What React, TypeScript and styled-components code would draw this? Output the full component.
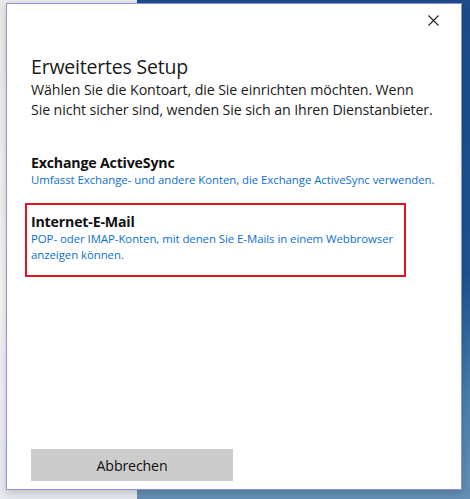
import React from "react";
import styled, { createGlobalStyle } from "styled-components";

const Global = createGlobalStyle`
  html, body { margin: 0; padding: 0; }
  body { width: 470px; height: 499px; overflow: hidden; font-family: "Open Sans", "Noto Sans", sans-serif; }
  #root { width: 470px; height: 499px; }
`;

const Desktop = styled.div`
  position: relative;
  width: 470px;
  height: 499px;
  display: flex;
  overflow: hidden;
`;

const LeftPane = styled.div`
  width: 137px;
  height: 100%;
  background: linear-gradient(to bottom, #e9e9ea 0%, #f4f4f4 60%, #e6e9ee 100%);
`;

const RightPane = styled.div`
  flex: 1;
  height: 100%;
  background: linear-gradient(to bottom, #1c4c8a 0%, #205290 55%, #4a7eab 80%, #6590b6 100%);
`;

const Dialog = styled.div`
  position: absolute;
  left: 6px;
  top: 3px;
  width: 456px;
  height: 487px;
  background: #ffffff;
  border: 1px solid #8d8fe0;
  box-shadow: 0 3px 8px rgba(0, 0, 0, 0.18);
  display: flex;
  flex-direction: column;
  box-sizing: border-box;
`;

const TitleBar = styled.div`
  height: 32px;
  display: flex;
  justify-content: flex-end;
  align-items: center;
  padding-right: 18px;
`;

const CloseButton = styled.button`
  width: 20px;
  height: 20px;
  border: none;
  background: transparent;
  padding: 0;
  display: flex;
  align-items: center;
  justify-content: center;
  margin-top: 1px;
`;

const Body = styled.div`
  flex: 1;
  display: flex;
  flex-direction: column;
  padding: 18px 24px 0 24px;
`;

const Heading = styled.h1`
  margin: 0;
  font-weight: 400;
  font-size: 19.5px;
  line-height: 26px;
  color: #1a1a1a;
  letter-spacing: -0.2px;
`;

const Intro = styled.p`
  margin: 0;
  font-size: 14.2px;
  line-height: 20px;
  color: #1a1a1a;
  letter-spacing: -0.1px;
`;

const Options = styled.div`
  display: flex;
  flex-direction: column;
  align-items: flex-start;
  margin-top: 33px;
  gap: 15px;
`;

const Option = styled.div<{ $selected?: boolean }>`
  box-sizing: border-box;
  width: ${(p) => (p.$selected ? "381px" : "auto")};
  margin-left: ${(p) => (p.$selected ? "-6px" : "0")};
  padding: ${(p) => (p.$selected ? "6.5px 6px 12px 4px" : "0")};
  border: ${(p) => (p.$selected ? "2px solid #e0141e" : "none")};
`;

const OptionTitle = styled.div`
  font-weight: 700;
  font-size: 14.2px;
  line-height: 19px;
  color: #111;
  letter-spacing: -0.2px;
`;

const OptionDesc = styled.div`
  font-size: 11.4px;
  line-height: 16px;
  color: #0a6fd2;
  letter-spacing: -0.05px;
  white-space: nowrap;
`;

const Spacer = styled.div`
  flex: 1;
`;

const Footer = styled.div`
  display: flex;
  padding: 0 0 8px 24px;
`;

const CancelButton = styled.button`
  width: 202px;
  height: 32px;
  border: none;
  background: #cccccc;
  font-family: "Open Sans", "Noto Sans", sans-serif;
  font-size: 14.2px;
  color: #111;
  letter-spacing: -0.15px;
  padding: 0;
`;

export default function App() {
  return (
    <>
      <Global />
      <Desktop>
        <LeftPane />
        <RightPane />
        <Dialog>
          <TitleBar>
            <CloseButton aria-label="Schließen">
              <svg width="11" height="11" viewBox="0 0 11 11">
                <path d="M0.5 0.5 L10.5 10.5 M10.5 0.5 L0.5 10.5" stroke="#222" strokeWidth="1.1" fill="none" />
              </svg>
            </CloseButton>
          </TitleBar>
          <Body>
            <Heading>Erweitertes Setup</Heading>
            <Intro>
              Wählen Sie die Kontoart, die Sie einrichten möchten. Wenn
              <br />
              Sie nicht sicher sind, wenden Sie sich an Ihren Dienstanbieter.
            </Intro>
            <Options>
              <Option>
                <OptionTitle>Exchange ActiveSync</OptionTitle>
                <OptionDesc>Umfasst Exchange- und andere Konten, die Exchange ActiveSync verwenden.</OptionDesc>
              </Option>
              <Option $selected>
                <OptionTitle>Internet-E-Mail</OptionTitle>
                <OptionDesc>
                  POP- oder IMAP-Konten, mit denen Sie E-Mails in einem Webbrowser
                  <br />
                  anzeigen können.
                </OptionDesc>
              </Option>
            </Options>
            <Spacer />
          </Body>
          <Footer>
            <CancelButton>Abbrechen</CancelButton>
          </Footer>
        </Dialog>
      </Desktop>
    </>
  );
}
